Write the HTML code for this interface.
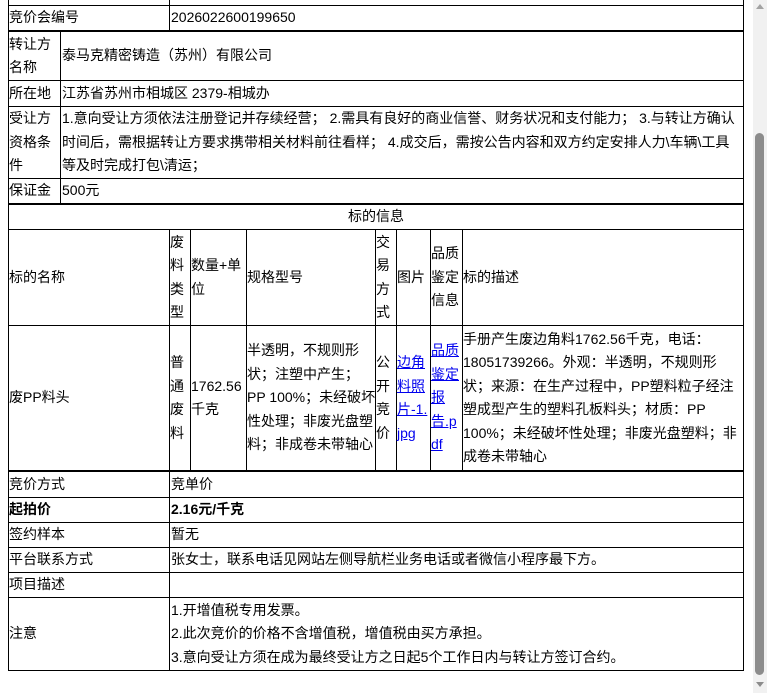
<!DOCTYPE html>
<html><head><meta charset="utf-8"><style>
body{margin:0;width:767px;height:693px;overflow:hidden;background:#fff;position:relative;font-family:"Liberation Sans","Noto Sans CJK SC",sans-serif;font-size:14px;color:#000}
.h{position:absolute;height:1px;background:#000}
.v{position:absolute;width:1px;background:#000}
.c{position:absolute;display:flex;align-items:center;line-height:23.5px;overflow-wrap:anywhere}
.c>span{display:block}
a{color:#00e;text-decoration:underline}
</style></head><body>
<div class="h" style="left:8px;width:736px;top:5px"></div>
<div class="h" style="left:8px;width:736px;top:30px;height:2px"></div>
<div class="h" style="left:8px;width:736px;top:80px"></div>
<div class="h" style="left:8px;width:736px;top:106px"></div>
<div class="h" style="left:8px;width:736px;top:178px"></div>
<div class="h" style="left:8px;width:736px;top:203px;height:2px"></div>
<div class="h" style="left:8px;width:736px;top:229px"></div>
<div class="h" style="left:8px;width:736px;top:325px"></div>
<div class="h" style="left:8px;width:736px;top:470px;height:2px"></div>
<div class="h" style="left:8px;width:736px;top:497px"></div>
<div class="h" style="left:8px;width:736px;top:522px"></div>
<div class="h" style="left:8px;width:736px;top:547px"></div>
<div class="h" style="left:8px;width:736px;top:572px"></div>
<div class="h" style="left:8px;width:736px;top:597px"></div>
<div class="h" style="left:8px;width:736px;top:670px"></div>
<div class="v" style="left:8px;top:0;height:671px"></div>
<div class="v" style="left:743px;top:0;height:671px"></div>
<div class="v" style="left:169px;top:0;height:31px"></div>
<div class="v" style="left:60px;top:31px;height:173px"></div>
<div class="v" style="left:169px;top:229px;height:242px"></div>
<div class="v" style="left:190px;top:229px;height:242px"></div>
<div class="v" style="left:246px;top:229px;height:242px"></div>
<div class="v" style="left:375px;top:229px;height:242px"></div>
<div class="v" style="left:396px;top:229px;height:242px"></div>
<div class="v" style="left:430px;top:229px;height:242px"></div>
<div class="v" style="left:462px;top:229px;height:242px"></div>
<div class="v" style="left:169px;top:471px;height:200px"></div>

<div class="c" style="left:9px;top:6px;height:24px">竞价会编号</div>
<div class="c" style="left:171px;top:6px;height:24px">2026022600199650</div>
<div class="c" style="left:9px;top:32px;height:48px;width:50px">转让方名称</div>
<div class="c" style="left:62px;top:32px;height:48px">泰马克精密铸造（苏州）有限公司</div>
<div class="c" style="left:9px;top:81px;height:25px">所在地</div>
<div class="c" style="left:62px;top:81px;height:25px">江苏省苏州市相城区 2379-相城办</div>
<div class="c" style="left:9px;top:107px;height:71px;width:50px">受让方资格条件</div>
<div class="c" style="left:62px;top:107px;height:71px;width:676px"><span>1.意向受让方须依法注册登记并存续经营； 2.需具有良好的商业信誉、财务状况和支付能力； 3.与转让方确认时间后，需根据转让方要求携带相关材料前往看样； 4.成交后，需按公告内容和双方约定安排人力\车辆\工具等及时完成打包\清运；</span></div>
<div class="c" style="left:9px;top:179px;height:24px">保证金</div>
<div class="c" style="left:62px;top:179px;height:24px">500元</div>
<div class="c" style="left:9px;top:205px;height:24px;width:734px;justify-content:center">标的信息</div>

<div class="c" style="left:9px;top:230px;height:95px">标的名称</div>
<div class="c" style="left:170px;top:230px;height:95px;width:16px">废料类型</div>
<div class="c" style="left:191px;top:230px;height:95px;width:54px">数量+单位</div>
<div class="c" style="left:247px;top:230px;height:95px">规格型号</div>
<div class="c" style="left:376px;top:230px;height:95px;width:16px">交易方式</div>
<div class="c" style="left:397px;top:230px;height:95px">图片</div>
<div class="c" style="left:431px;top:230px;height:95px;width:30px">品质鉴定信息</div>
<div class="c" style="left:463px;top:230px;height:95px">标的描述</div>

<div class="c" style="left:9px;top:326px;height:144px">废PP料头</div>
<div class="c" style="left:170px;top:326px;height:144px;width:16px">普通废料</div>
<div class="c" style="left:191px;top:326px;height:144px;width:54px"><span>1762.56千克</span></div>
<div class="c" style="left:247px;top:326px;height:144px;width:128.5px"><span>半透明，不规则形状；注塑中产生；PP 100%；未经破坏性处理；非废光盘塑料；非成卷未带轴心</span></div>
<div class="c" style="left:376px;top:326px;height:144px;width:16px">公开竞价</div>
<div class="c" style="left:397px;top:326px;height:144px;width:32px"><span><a>边角料照片-1.jpg</a></span></div>
<div class="c" style="left:431px;top:326px;height:144px;width:30px"><span><a>品质鉴定报告.pdf</a></span></div>
<div class="c" style="left:463px;top:326px;height:144px;width:276px"><span>手册产生废边角料1762.56千克，电话：18051739266。外观：半透明，不规则形状；来源：在生产过程中，PP塑料粒子经注塑成型产生的塑料孔板料头；材质：PP 100%；未经破坏性处理；非废光盘塑料；非成卷未带轴心</span></div>

<div class="c" style="left:9px;top:472px;height:25px">竞价方式</div>
<div class="c" style="left:171px;top:472px;height:25px">竞单价</div>
<div class="c" style="left:9px;top:498px;height:24px;font-weight:bold">起拍价</div>
<div class="c" style="left:171px;top:498px;height:24px;font-weight:bold">2.16元/千克</div>
<div class="c" style="left:9px;top:523px;height:24px">签约样本</div>
<div class="c" style="left:171px;top:523px;height:24px">暂无</div>
<div class="c" style="left:9px;top:548px;height:24px">平台联系方式</div>
<div class="c" style="left:171px;top:548px;height:24px">张女士，联系电话见网站左侧导航栏业务电话或者微信小程序最下方。</div>
<div class="c" style="left:9px;top:573px;height:24px">项目描述</div>
<div class="c" style="left:9px;top:598px;height:72px">注意</div>
<div class="c" style="left:171px;top:598px;height:72px;width:570px"><span>1.开增值税专用发票。<br>2.此次竞价的价格不含增值税，增值税由买方承担。<br>3.意向受让方须在成为最终受让方之日起5个工作日内与转让方签订合约。</span></div>

<div style="position:absolute;left:753px;top:0;width:14px;height:693px;background:#f1f1f1"></div>
<div style="position:absolute;left:756px;top:4px;width:0;height:0;border-left:4px solid transparent;border-right:4px solid transparent;border-bottom:5px solid #a3a3a3"></div>
<div style="position:absolute;left:755px;top:133px;width:9px;height:542px;background:#8c8c8c;border-radius:5px"></div>
<div style="position:absolute;left:756px;top:682px;width:0;height:0;border-left:4px solid transparent;border-right:4px solid transparent;border-top:5px solid #8c8c8c"></div>
</body></html>
